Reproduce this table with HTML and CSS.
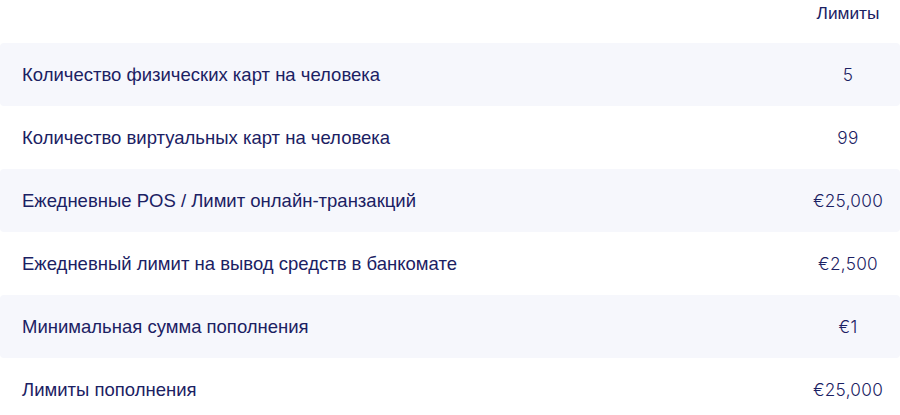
FILE: index.html
```html
<!DOCTYPE html>
<html lang="ru">
<head>
<meta charset="utf-8">
<link rel="stylesheet" href="styles.css">
</head>
<body>
<div class="table">
  <div class="row head">
    <div class="label"></div>
    <div class="value">Лимиты</div>
  </div>
  <div class="row striped">
    <div class="label">Количество физических карт на человека</div>
    <div class="value">5</div>
  </div>
  <div class="row">
    <div class="label">Количество виртуальных карт на человека</div>
    <div class="value">99</div>
  </div>
  <div class="row striped">
    <div class="label">Ежедневные POS / Лимит онлайн-транзакций</div>
    <div class="value">€25,000</div>
  </div>
  <div class="row">
    <div class="label">Ежедневный лимит на вывод средств в банкомате</div>
    <div class="value">€2,500</div>
  </div>
  <div class="row striped">
    <div class="label">Минимальная сумма пополнения</div>
    <div class="value">€1</div>
  </div>
  <div class="row">
    <div class="label">Лимиты пополнения</div>
    <div class="value">€25,000</div>
  </div>
</div>
</body>
</html>
```
FILE: styles.css
```css
html, body {
  margin: 0;
  padding: 0;
  background: #ffffff;
}
body {
  font-family: "Liberation Sans", Arial, sans-serif;
  color: #1b2163;
  font-size: 16px;
}
.table {
  display: flex;
  flex-direction: column;
  width: 900px;
}
.row {
  display: grid;
  grid-template-columns: 1fr 104px;
  align-items: center;
  height: 63px;
  border-radius: 4px;
}
.row.head {
  height: 43px;
  align-items: start;
}
.row.head .value {
  padding-top: 3px;
  font-family: "Liberation Sans", Arial, sans-serif;
  font-size: 17.3px;
  letter-spacing: 0;
}
.striped {
  background: #f6f7fc;
}
.label {
  padding-left: 22px;
  font-size: 18.5px;
}
.value {
  text-align: center;
  font-family: "Inter", "Liberation Sans", sans-serif;
  font-weight: 300;
  font-size: 17.2px;
  letter-spacing: 0.3px;
}
```
